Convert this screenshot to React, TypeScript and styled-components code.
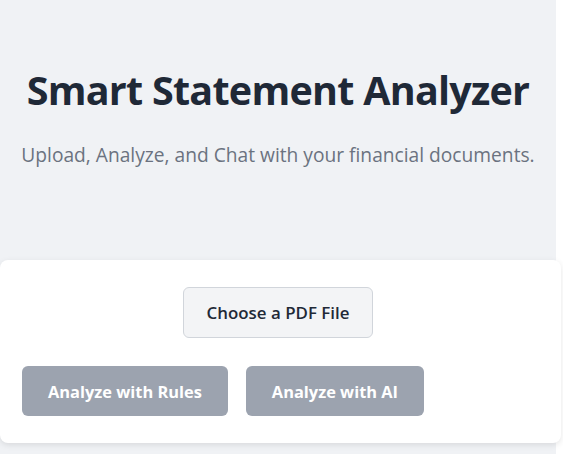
import React from "react";
import styled, { createGlobalStyle } from "styled-components";

const Global = createGlobalStyle`
  html, body { margin: 0; padding: 0; background: #ffffff; }
  body { font-family: "Open Sans", "Noto Sans", sans-serif; }
  * { box-sizing: border-box; }
`;

const Page = styled.div`
  width: 556px;
  min-height: 454px;
  background: #f0f2f5;
  display: flex;
  flex-direction: column;
  padding-top: 66px;
`;

const Header = styled.header`
  display: flex;
  flex-direction: column;
  align-items: center;
  text-align: center;
`;

const Title = styled.h1`
  margin: 0;
  font-size: 39.5px;
  line-height: 48px;
  font-weight: 700;
  letter-spacing: -0.75px;
  color: #1f2937;
  white-space: nowrap;
`;

const Subtitle = styled.p`
  margin: 27px 0 0;
  font-size: 19.2px;
  line-height: 27px;
  color: #6b7280;
  white-space: nowrap;
`;

const Card = styled.section`
  margin-top: 92px;
  width: 561px;
  background: #ffffff;
  border-radius: 8px;
  box-shadow: 0 2px 6px rgba(0, 0, 0, 0.1);
  padding: 27px 27px 27px 22px;
  display: flex;
  flex-direction: column;
  gap: 28px;
`;

const UploadRow = styled.div`
  display: flex;
  justify-content: center;
`;

const FileButton = styled.button`
  height: 51px;
  padding: 0 23px;
  background: #f3f4f6;
  border: 1px solid #d1d5db;
  border-radius: 6px;
  font-family: inherit;
  font-size: 16.9px;
  font-weight: 600;
  color: #1f2937;
  cursor: pointer;
`;

const ActionRow = styled.div`
  display: flex;
  gap: 18px;
`;

const ActionButton = styled.button`
  height: 50px;
  padding: 0 26px;
  background: #9ca3af;
  border: none;
  border-radius: 6px;
  font-family: inherit;
  font-size: 16.4px;
  font-weight: 700;
  color: #ffffff;
  cursor: not-allowed;
`;

export default function App() {
  return (
    <>
      <Global />
      <Page>
        <Header>
          <Title>Smart Statement Analyzer</Title>
          <Subtitle>Upload, Analyze, and Chat with your financial documents.</Subtitle>
        </Header>
        <Card>
          <UploadRow>
            <FileButton>Choose a PDF File</FileButton>
          </UploadRow>
          <ActionRow>
            <ActionButton disabled>Analyze with Rules</ActionButton>
            <ActionButton disabled>Analyze with AI</ActionButton>
          </ActionRow>
        </Card>
      </Page>
    </>
  );
}
